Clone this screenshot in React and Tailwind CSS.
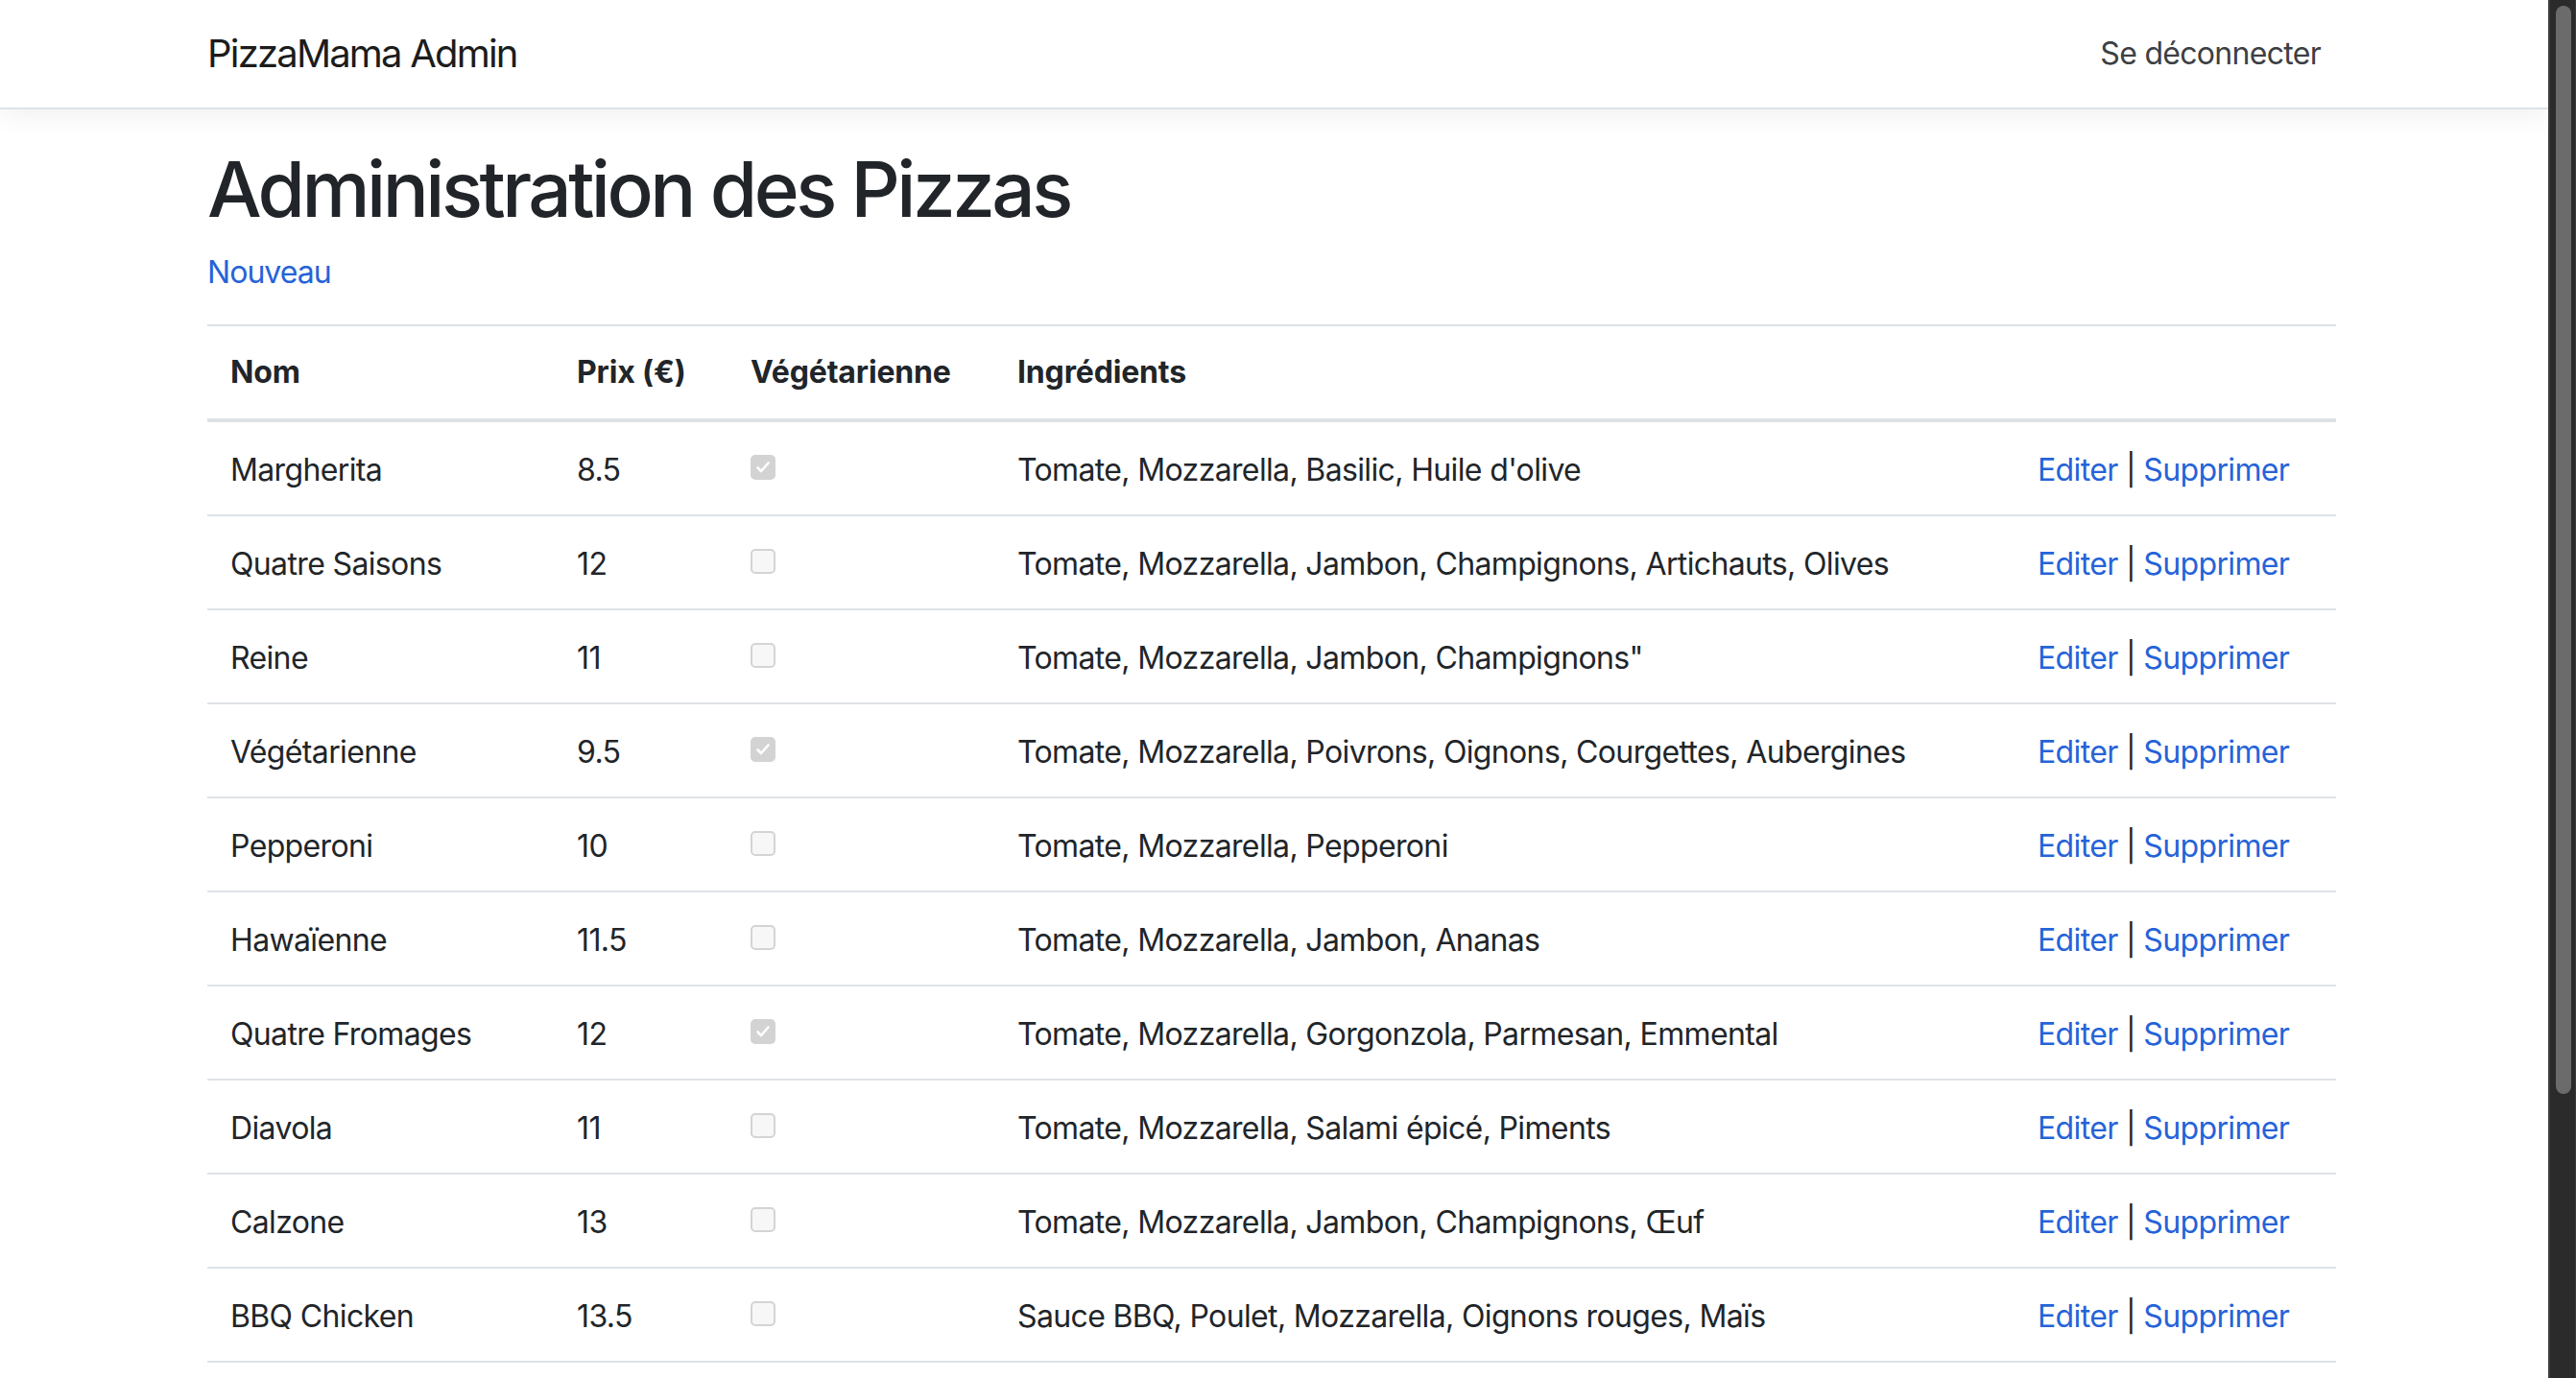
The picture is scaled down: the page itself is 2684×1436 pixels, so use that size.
import React from 'react';

const pizzas = [
  { nom: 'Margherita', prix: '8.5', veg: true, ingredients: "Tomate, Mozzarella, Basilic, Huile d'olive" },
  { nom: 'Quatre Saisons', prix: '12', veg: false, ingredients: 'Tomate, Mozzarella, Jambon, Champignons, Artichauts, Olives' },
  { nom: 'Reine', prix: '11', veg: false, ingredients: 'Tomate, Mozzarella, Jambon, Champignons"' },
  { nom: 'Végétarienne', prix: '9.5', veg: true, ingredients: 'Tomate, Mozzarella, Poivrons, Oignons, Courgettes, Aubergines' },
  { nom: 'Pepperoni', prix: '10', veg: false, ingredients: 'Tomate, Mozzarella, Pepperoni' },
  { nom: 'Hawaïenne', prix: '11.5', veg: false, ingredients: 'Tomate, Mozzarella, Jambon, Ananas' },
  { nom: 'Quatre Fromages', prix: '12', veg: true, ingredients: 'Tomate, Mozzarella, Gorgonzola, Parmesan, Emmental' },
  { nom: 'Diavola', prix: '11', veg: false, ingredients: 'Tomate, Mozzarella, Salami épicé, Piments' },
  { nom: 'Calzone', prix: '13', veg: false, ingredients: 'Tomate, Mozzarella, Jambon, Champignons, Œuf' },
  { nom: 'BBQ Chicken', prix: '13.5', veg: false, ingredients: 'Sauce BBQ, Poulet, Mozzarella, Oignons rouges, Maïs' },
];

// disabled native-looking checkbox
const Checkbox = ({ checked }) => {
  if (checked) {
    return (
      <div className="w-[26px] h-[26px] rounded-[5px] bg-[#d3d3d3] flex items-center justify-center">
        <svg width="18" height="18" viewBox="0 0 18 18" fill="none">
          <path d="M3.5 9.5l3.5 3.5 7.5-8.5" stroke="white" strokeWidth="2.6" strokeLinecap="round" strokeLinejoin="round" />
        </svg>
      </div>
    );
  }
  return <div className="w-[26px] h-[26px] rounded-[5px] bg-[#f7f7f7] border-2 border-[#d4d4d4]" />;
};

const cell = 'px-[24px] pt-[26px] pb-[22px] border-b-2 border-[#dee2e6] whitespace-nowrap';
const head = 'text-left font-bold px-[24px] py-[24px] border-t-2 border-b-4 border-[#dee2e6] tracking-[-0.005em]';

const App = () => {
  return (
    <div
      className="flex h-screen w-full overflow-hidden bg-white text-[#212529]"
      style={{ fontFamily: 'Inter, "Noto Sans", sans-serif' }}
    >
      <div className="flex-1 min-w-0 overflow-hidden">
        {/* Navbar */}
        <nav className="relative z-10 h-[114px] bg-white border-b-2 border-[#dee2e6] shadow-[0_4px_28px_rgba(0,0,0,0.07)]">
          <div className="ml-[216px] w-[2218px] h-full flex items-center justify-between">
            <span className="text-[40px] leading-[60px] tracking-[-0.045em] text-[#1c1c1c]">PizzaMama Admin</span>
            <a className="px-[16px] text-[32px] leading-[48px] tracking-[-0.022em] text-[#3c4044]">Se déconnecter</a>
          </div>
        </nav>

        <main className="ml-[216px] w-[2218px] pt-[35px]">
          <h1 className="text-[80px] leading-[96px] font-medium tracking-[-0.044em] mb-[15px]">Administration des Pizzas</h1>
          <p className="mb-[30px] text-[32px] leading-[48px] tracking-[-0.03em]">
            <a className="text-[#2563d8]">Nouveau</a>
          </p>

          <table className="w-full table-fixed border-collapse text-[32px] leading-[48px]">
            <colgroup>
              <col className="w-[361px]" />
              <col className="w-[181px]" />
              <col className="w-[278px]" />
              <col className="w-[1063px]" />
              <col className="w-[335px]" />
            </colgroup>
            <thead>
              <tr>
                <th className={head}>Nom</th>
                <th className={head}>Prix (€)</th>
                <th className={head}>Végétarienne</th>
                <th className={head}>Ingrédients</th>
                <th className="px-[24px] py-[24px] border-t-2 border-b-4 border-[#dee2e6]"></th>
              </tr>
            </thead>
            <tbody className="tracking-[-0.02em]">
              {pizzas.map((p) => (
                <tr key={p.nom}>
                  <td className={cell}>{p.nom}</td>
                  <td className={cell}>{p.prix}</td>
                  <td className={cell}>
                    <div className="h-[48px] pt-[8px]">
                      <Checkbox checked={p.veg} />
                    </div>
                  </td>
                  <td className={cell}>{p.ingredients}</td>
                  <td className={cell}>
                    <a className="text-[#2563d8]">Editer</a> | <a className="text-[#2563d8]">Supprimer</a>
                  </td>
                </tr>
              ))}
            </tbody>
          </table>
        </main>
      </div>

      {/* Scrollbar */}
      <div className="w-[29px] h-full flex bg-[#2b2b2b] border-l-2 border-[#3d3d3d]">
        <div className="flex-1 pl-[6px] pr-[4px] pt-[6px]">
          <div className="w-[16px] h-[1134px] rounded-full bg-[#6b6b6b]" />
        </div>
        <div className="w-[2px] bg-[#3a3a3a]" />
      </div>
    </div>
  );
};

export default App;
